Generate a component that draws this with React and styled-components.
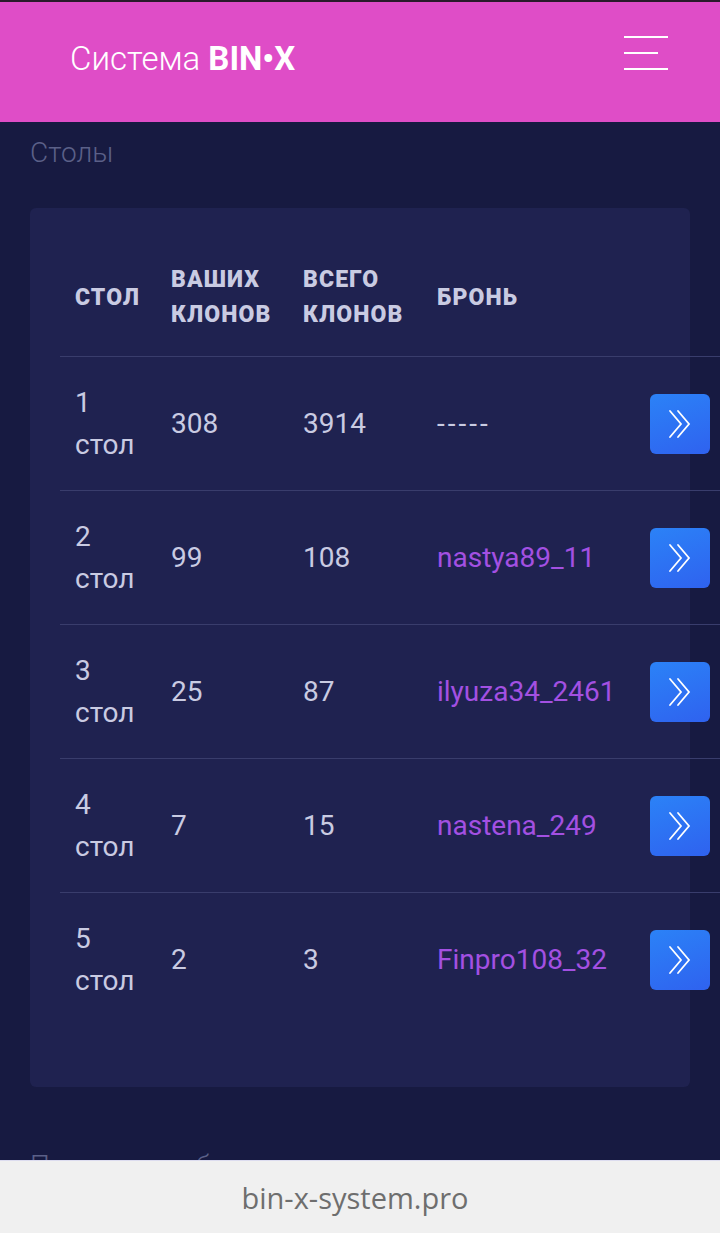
import styled, { createGlobalStyle } from 'styled-components'

const GlobalStyle = createGlobalStyle`
  html, body {
    margin: 0;
    padding: 0;
    background: #171a41;
  }
  body {
    font-family: Roboto, "Noto Sans", sans-serif;
    border-top: 2px solid #2a1a2a;
  }
`

const Header = styled.header`
  height: 120px;
  background: #df4dc7;
  display: flex;
  align-items: center;
  justify-content: space-between;
  padding: 0 52px 0 70px;
`

const Logo = styled.div`
  color: #fff;
  font-size: 33px;
  font-weight: 300;
  margin-top: -8px;

  b {
    font-weight: 700;
  }
`

const Burger = styled.button`
  width: 44px;
  height: 34px;
  margin-top: -18px;
  padding: 0;
  background: none;
  border: 0;
  display: flex;
  flex-direction: column;
  justify-content: space-between;
  align-items: flex-start;

  span {
    display: block;
    height: 2px;
    width: 44px;
    background: #fff;
  }
  span:nth-child(2) {
    width: 34px;
  }
`

const Main = styled.main`
  padding: 16px 30px 0;
  overflow: hidden;
`

const Title = styled.h2`
  margin: 0 0 40px;
  font-size: 28px;
  font-weight: 300;
  color: #5b6088;
  line-height: 30px;
`

const Card = styled.section`
  background: #1f2250;
  border-radius: 6px;
  padding: 30px 0 61px 30px;
`

const Table = styled.table`
  width: 660px;
  border-collapse: collapse;
`

const Th = styled.th`
  text-align: left;
  vertical-align: middle;
  font-size: 23px;
  font-weight: 900;
  letter-spacing: 1.1px;
  line-height: 35px;
  color: #c9cbe2;
  text-transform: uppercase;
  padding: 24px 0 24px ${p => p.$first ? 15 : 0}px;
  height: 70px;
  width: ${p => p.$w}px;
`

const Row = styled.tr`
  border-top: 1px solid #393d6c;
`

const Td = styled.td`
  height: 133px;
  padding: 0 0 0 ${p => p.$first ? 15 : 0}px;
  vertical-align: middle;
  font-size: 28px;
  line-height: 42px;
  color: ${p => p.$user ? '#a350e2' : '#c9cbe2'};
  letter-spacing: ${p => p.$dash ? 3 : 0}px;
  white-space: nowrap;
`

const ActionCell = styled.td`
  width: 70px;
  padding: 0;
  vertical-align: middle;
`

const GoButton = styled.button`
  width: 60px;
  height: 60px;
  border: 0;
  border-radius: 6px;
  background: linear-gradient(160deg, #2b82f7 0%, #2f62ef 100%);
  display: flex;
  align-items: center;
  justify-content: center;
  padding: 0;
`

const AddressBar = styled.div`
  position: fixed;
  left: 0;
  right: 0;
  bottom: 0;
  height: 72px;
  background: #f0f0f0;
  border-top: 1px solid #dcdcef;
  display: flex;
  align-items: center;
  justify-content: center;
  padding-right: 10px;
  font-family: "Open Sans", "Noto Sans", sans-serif;
  font-size: 29px;
  color: #6e6e6e;
`

const NextTitle = styled(Title)`
  margin: 64px 0 0;
  padding-bottom: 80px;
`

const rows = [
  { n: 1, mine: 308, total: 3914, user: '-----' },
  { n: 2, mine: 99, total: 108, user: 'nastya89_11' },
  { n: 3, mine: 25, total: 87, user: 'ilyuza34_2461' },
  { n: 4, mine: 7, total: 15, user: 'nastena_249' },
  { n: 5, mine: 2, total: 3, user: 'Finpro108_32' },
]

const Chevrons = () => (
  <svg width="26" height="30" viewBox="0 0 26 30" fill="none" stroke="#fff" strokeWidth="1.8" strokeLinecap="round">
    <polyline points="3,2 14,15 3,28" />
    <polyline points="11,2 22,15 11,28" />
  </svg>
)

export default function App() {
  return (
    <>
      <GlobalStyle />
      <Header>
        <Logo>Система <b>BIN•X</b></Logo>
        <Burger aria-label="menu">
          <span /><span /><span />
        </Burger>
      </Header>
      <Main>
        <Title>Столы</Title>
        <Card>
          <Table>
            <thead>
              <tr>
                <Th $first $w={96}>Стол</Th>
                <Th $w={132}>Ваших<br />клонов</Th>
                <Th $w={134}>Всего<br />клонов</Th>
                <Th>Бронь</Th>
                <Th $w={70} />
              </tr>
            </thead>
            <tbody>
              {rows.map(r => {
                const empty = r.user === '-----'
                return (
                  <Row key={r.n}>
                    <Td $first>{r.n}<br />стол</Td>
                    <Td>{r.mine}</Td>
                    <Td>{r.total}</Td>
                    <Td $user={!empty} $dash={empty}>{r.user}</Td>
                    <ActionCell>
                      <GoButton><Chevrons /></GoButton>
                    </ActionCell>
                  </Row>
                )
              })}
            </tbody>
          </Table>
        </Card>
        <NextTitle>Пополнение баланса</NextTitle>
      </Main>
      <AddressBar>bin-x-system.pro</AddressBar>
    </>
  )
}
